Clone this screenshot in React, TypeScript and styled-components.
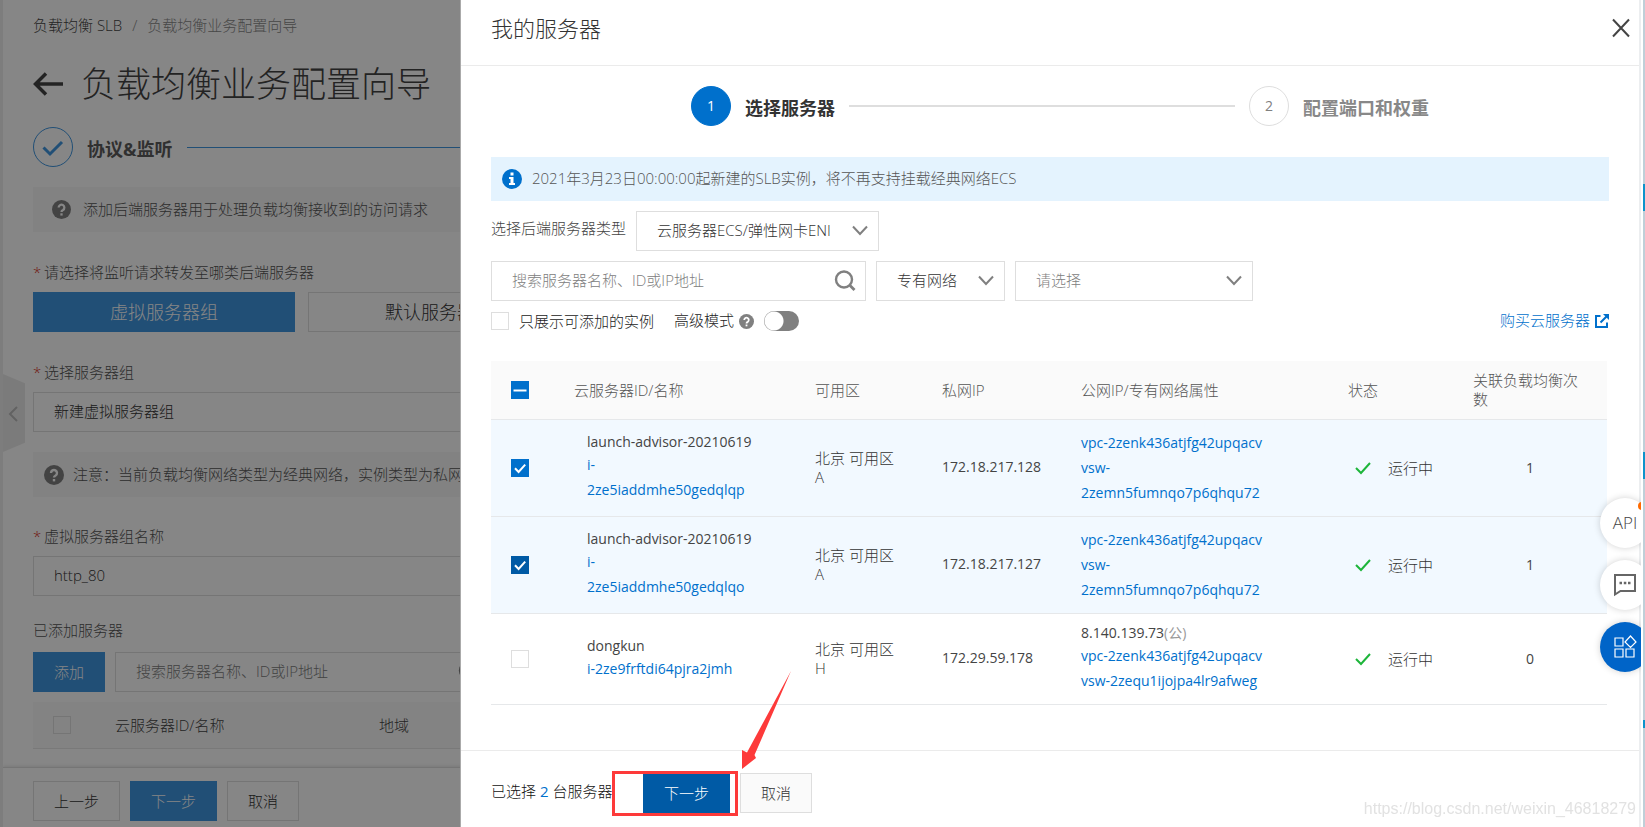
import React from "react";
import styled, { createGlobalStyle } from "styled-components";

const GlobalStyle = createGlobalStyle`
  *, *::before, *::after { box-sizing: border-box; }
  body {
    margin: 0;
    background: #fff;
    color: #333;
    font-family: "Open Sans", "Noto Sans", "Noto Sans CJK SC", sans-serif;
    font-size: 15px;
    font-weight: 300;
    line-height: 20px;
  }
  button, input, select { font: inherit; color: inherit; }
  a { color: #0070cc; text-decoration: none; }
`;

/* ---------- shared controls ---------- */

const Button = styled.button<{ $kind?: "primary" | "pressed" | "plain" | "faded" }>`
  flex: none;
  height: 40px;
  padding: 0 20px;
  border: 1px solid;
  cursor: pointer;
  white-space: nowrap;
  color: ${(p) => (p.$kind === "primary" || p.$kind === "pressed" ? "#fff" : "#333")};
  background: ${(p) =>
    p.$kind === "primary" ? "#3f96e0" : p.$kind === "pressed" ? "#005aa5" : p.$kind === "faded" ? "#fafafa" : "transparent"};
  border-color: ${(p) => (p.$kind === "primary" ? "#3f96e0" : p.$kind === "pressed" ? "#005aa5" : "#dedede")};
`;

const Field = styled.div<{ $width?: string }>`
  position: relative;
  display: flex;
  align-items: center;
  width: ${(p) => p.$width || "100%"};
  height: 40px;
  border: 1px solid #dedede;
  & > svg {
    position: absolute;
    right: 9px;
    pointer-events: none;
  }
`;

const TextInput = styled.input`
  width: 100%;
  height: 100%;
  border: 0;
  outline: 0;
  padding: 0 40px 2px 20px;
  background: transparent;
  &::placeholder { color: #808080; opacity: 1; }
`;

const Select = styled.select<{ $muted?: boolean }>`
  appearance: none;
  width: 100%;
  height: 100%;
  border: 0;
  outline: 0;
  padding: 0 30px 2px 20px;
  background: transparent;
  color: ${(p) => (p.$muted ? "#808080" : "#333")};
`;

const CheckInput = styled.input`
  appearance: none;
  display: block;
  flex: none;
  width: 18px;
  height: 18px;
  margin: 0;
  border: 1px solid #dedede;
`;

const CheckWrap = styled.span<{ $fill?: string }>`
  display: grid;
  width: 18px;
  height: 18px;
  & > * { grid-area: 1 / 1; }
  & > svg { pointer-events: none; z-index: 1; }
  ${CheckInput} {
    border-color: ${(p) => p.$fill || "#dedede"};
    background: ${(p) => p.$fill || "transparent"};
  }
`;

type CheckProps = { label: string; fill?: string; mark?: "check" | "dash"; id?: string };

function Checkbox({ label, fill, mark, id }: CheckProps) {
  return (
    <CheckWrap $fill={fill}>
      <CheckInput type="checkbox" id={id} aria-label={label} defaultChecked={mark === "check"} />
      {mark && (
        <svg width="18" height="18" viewBox="0 0 18 18" fill="none" stroke="#fff" strokeWidth="2">
          <path d={mark === "check" ? "M4 9.2 7.6 13 14.2 5.6" : "M2.5 9.5H15.5"} />
        </svg>
      )}
    </CheckWrap>
  );
}

function Chevron() {
  return (
    <svg width="18" height="12" viewBox="0 0 18 12" fill="none" stroke="#808080" strokeWidth="2">
      <path d="M2 1.5 9 9 16 1.5" />
    </svg>
  );
}

function SearchIcon() {
  return (
    <svg width="22" height="22" viewBox="0 0 22 22" fill="none" stroke="#808080" strokeWidth="2.4">
      <circle cx="10" cy="9.5" r="8" />
      <path d="M16 15.500 20.500 20" strokeWidth="2.8" />
    </svg>
  );
}

function Help({ size, color = "#808080" }: { size: number; color?: string }) {
  return (
    <svg width={size} height={size} viewBox="0 0 20 20" fill="none" stroke="#fff" strokeWidth="2.4">
      <circle cx="10" cy="10" r="10" fill={color} stroke="none" />
      <path d="M7 8a3 3 0 1 1 4.6 2.5C10.4 11.200 10 11.500 10 12.600" />
      <path d="M10 14v2.400" />
    </svg>
  );
}

/* ---------- page behind the drawer ---------- */

const Page = styled.div`
  position: relative;
  display: flex;
  flex-direction: column;
  min-height: 100vh;
  overflow: hidden;
  border-left: 3px solid #eee;
`;

const PageBody = styled.main`
  display: flex;
  flex-direction: column;
  padding: 15px 30px 0;
`;

const Crumbs = styled.nav`
  display: flex;
  gap: 10px;
  margin-bottom: 24px;
  a { color: #444; }
  span { color: #888; }
`;

const PageTitle = styled.h1`
  display: flex;
  align-items: center;
  gap: 18px;
  margin: 0 0 18px;
  font-size: 35px;
  line-height: 50px;
  font-weight: 300;
  color: #444;
`;

const StepRow = styled.div`
  display: flex;
  align-items: center;
  gap: 14px;
  margin-bottom: 20px;
`;

const StepName = styled.strong<{ $tone?: string }>`
  font-size: 18px;
  line-height: 24px;
  font-weight: 700;
  padding-top: 4px;
  color: ${(p) => p.$tone || "#333"};
  white-space: nowrap;
`;

const StepLine = styled.span<{ $done?: boolean }>`
  flex: 1;
  height: ${(p) => (p.$done ? 1 : 2)}px;
  background: ${(p) => (p.$done ? "#3f96e0" : "#dedede")};
`;

const Notice = styled.div<{ $inset: number; $gap: number }>`
  display: flex;
  align-items: center;
  gap: ${(p) => p.$gap}px;
  height: 45px;
  padding: 0 ${(p) => p.$inset}px;
  background: #f8f8f8;
  color: #555;
  white-space: nowrap;
  span { padding-bottom: 2px; }
`;

const GroupNotice = styled(Notice)`
  margin-top: 20px;
`;

const Label = styled.label<{ $top: number; $bottom?: number }>`
  display: flex;
  gap: 5px;
  margin: ${(p) => p.$top}px 0 ${(p) => p.$bottom || 10}px;
  color: #555;
  i { width: 6px; color: #d93026; font-style: normal; }
`;

const Group = styled.div<{ $gap: number }>`
  display: flex;
  gap: ${(p) => p.$gap}px;
`;

const TabButton = styled(Button)`
  width: 262px;
  font-size: 18px;
`;

const AddedHead = styled.table`
  width: 100%;
  margin-top: 10px;
  table-layout: fixed;
  border-collapse: collapse;
  background: #fafafa;
  th {
    height: 46px;
    padding: 0;
    text-align: left;
    font-weight: 300;
    color: #444;
    border-bottom: 1px solid #e6e6e6;
  }
  th:first-child { width: 82px; padding-left: 20px; }
  th:nth-child(2) { width: 264px; }
`;

const PageFooter = styled.footer`
  display: flex;
  gap: 10px;
  height: 60px;
  margin-top: auto;
  padding: 13px 30px 0;
  border-top: 1px solid #dedede;
  box-shadow: 0 -1px 3px rgba(0, 0, 0, 0.1);
`;

const Handle = styled.button`
  position: absolute;
  left: 0;
  top: 374px;
  width: 22px;
  height: 78px;
  padding: 0;
  border: 0;
  background: #ebebeb;
  clip-path: polygon(0 0, 100% 12%, 100% 88%, 0 100%);
`;

const Scrim = styled.div`
  position: fixed;
  inset: 0;
  background: rgba(0, 0, 0, 0.475);
`;

/* ---------- drawer ---------- */

const Drawer = styled.section`
  position: fixed;
  top: 0;
  bottom: 0;
  left: 460px;
  right: 4px;
  display: flex;
  flex-direction: column;
  background: #fff;
  border-left: 1px solid #aaa;
  border-right: 2px solid #eceef0;
`;

const DrawerHead = styled.header`
  display: flex;
  align-items: center;
  justify-content: space-between;
  height: 66px;
  padding: 0 8px 10px 30px;
  border-bottom: 1px solid #ebebeb;
  h2 { margin: 0; font-size: 22px; line-height: 30px; font-weight: 300; }
`;

const IconButton = styled.button`
  display: flex;
  padding: 0;
  border: 0;
  background: none;
  cursor: pointer;
`;

const DrawerBody = styled.div`
  flex: 1;
  padding: 20px 30px 0;
`;

const Steps = styled.div`
  display: flex;
  align-items: center;
  gap: 14px;
  margin: 0 180px 31px 200px;
`;

const StepDot = styled.span<{ $active?: boolean }>`
  display: flex;
  align-items: center;
  justify-content: center;
  flex: none;
  width: 40px;
  height: 40px;
  border-radius: 50%;
  border: 1px solid ${(p) => (p.$active ? "#0070cc" : "#dedede")};
  background: ${(p) => (p.$active ? "#0070cc" : "#fff")};
  color: ${(p) => (p.$active ? "#fff" : "#808080")};
  font-size: 14px;
  font-weight: 400;
`;

const Alert = styled.div`
  display: flex;
  align-items: center;
  gap: 10px;
  height: 44px;
  padding: 0 11px;
  background: #e4f3fe;
  color: #555;
  span { padding-bottom: 2px; }
`;

const Filters = styled.div`
  display: flex;
  align-items: center;
  gap: 10px;
  margin-top: 10px;
  & > label { flex: none; padding-bottom: 6px; color: #444; }
`;

const Options = styled.div`
  display: flex;
  align-items: center;
  gap: 10px;
  height: 20px;
  margin-top: 10px;
  color: #222;
`;

const Mode = styled.span`
  display: flex;
  align-items: center;
  gap: 5px;
  margin-left: 10px;
  label { padding-bottom: 2px; }
`;

const Toggle = styled.input`
  appearance: none;
  width: 35px;
  height: 20px;
  margin: 0;
  border-radius: 10px;
  background: radial-gradient(circle at 10px 10px, #fff 9px, #808080 10px);
`;

const BuyLink = styled.a`
  display: flex;
  align-items: center;
  gap: 5px;
  margin-left: auto;
  span { padding-bottom: 2px; }
`;

const ServerTable = styled.table`
  width: calc(100% - 2px);
  margin-top: 30px;
  table-layout: fixed;
  border-collapse: separate;
  border-spacing: 0;
  th, td {
    padding: 0 16px;
    text-align: left;
    vertical-align: middle;
    font-weight: 300;
    border-bottom: 1px solid #e6e8ea;
  }
  th { height: 59px; background: #fafafa; color: #555; line-height: 19px; }
  th:first-child, td:first-child { padding: 0 20px; }
`;

const Row = styled.tr<{ $selected: boolean }>`
  height: ${(p) => (p.$selected ? 97 : 91)}px;
  background: ${(p) => (p.$selected ? "#f2f9ff" : "#fff")};
`;

const Lines = styled.div<{ $indent?: boolean }>`
  display: flex;
  flex-direction: column;
  padding: 0 0 2px ${(p) => (p.$indent ? 13 : 0)}px;
  font-size: 14px;
  font-weight: 400;
  white-space: nowrap;
  a { line-height: 25px; }
  span { line-height: 20px; color: #444; }
  small { font-size: 14px; color: #999; }
`;

const Zone = styled.span`
  display: block;
  line-height: 19px;
`;

const Ip = styled.span`
  display: block;
  padding-bottom: 2px;
  font-size: 14px;
  font-weight: 400;
  color: #444;
`;

const Status = styled.span`
  display: flex;
  align-items: center;
  gap: 17px;
  padding-left: 7px;
`;

const Count = styled.td`
  && { padding-right: 20px; text-align: center; font-size: 14px; font-weight: 400; color: #444; }
`;

const DrawerFoot = styled.footer`
  display: flex;
  align-items: center;
  gap: 10px;
  height: 77px;
  padding: 7px 30px 0;
  border-top: 1px solid #ebebeb;
`;

const Selected = styled.span`
  width: 142px;
  padding-bottom: 4px;
  color: #111;
  white-space: nowrap;
  b { color: #0070cc; font-weight: 400; }
`;

/* ---------- things drawn over the drawer ---------- */

const Marker = styled.div`
  position: absolute;
  left: 151px;
  bottom: 11px;
  width: 126px;
  height: 45px;
  border: 3px solid #fd3a3a;
  pointer-events: none;
`;

const Arrow = styled.svg`
  position: absolute;
  left: 280px;
  bottom: 57px;
  pointer-events: none;
`;

const Dock = styled.aside`
  position: fixed;
  right: 4px;
  top: 490px;
  width: 60px;
  display: flex;
  flex-direction: column;
  align-items: flex-start;
  gap: 12px;
  padding: 8px 0 8px 19px;
  overflow: hidden;
`;

const DockButton = styled.button<{ $blue?: boolean }>`
  position: relative;
  flex: none;
  display: flex;
  align-items: center;
  justify-content: center;
  width: 50px;
  height: 50px;
  padding: 0;
  border: 0;
  border-radius: 50%;
  background: ${(p) => (p.$blue ? "#0064c8" : "#fff")};
  box-shadow: 0 0 7px rgba(0, 0, 0, 0.18);
  color: #444;
  font-size: 17px;
`;

const Dot = styled.i`
  position: absolute;
  top: 4px;
  right: 4px;
  width: 8px;
  height: 8px;
  border-radius: 50%;
  background: #ff6a00;
`;

const Edge = styled.div`
  position: fixed;
  top: 0;
  bottom: 0;
  right: 0;
  width: 4px;
  background: #fff;
  border-right: 2px solid #bfcfd8;
`;

const EdgeMark = styled.i<{ $top: number; $height: number }>`
  position: absolute;
  right: -2px;
  top: ${(p) => p.$top}px;
  width: 2px;
  height: ${(p) => p.$height}px;
  background: #0d93cb;
`;

const Watermark = styled.div`
  position: fixed;
  right: 9px;
  bottom: 8px;
  font-family: "Liberation Sans", sans-serif;
  font-size: 16px;
  font-weight: 400;
  color: #e2e2e2;
`;

/* ---------- data ---------- */

const VPC = "vpc-2zenk436atjfg42upqacv";

const servers = [
  {
    name: "launch-advisor-20210619", id: ["i-", "2ze5iaddmhe50gedqlqp"], zone: "A", ip: "172.18.217.128",
    net: [VPC, "vsw-", "2zemn5fumnqo7p6qhqu72"], count: 1, fill: "#0070cc",
  },
  {
    name: "launch-advisor-20210619", id: ["i-", "2ze5iaddmhe50gedqlqo"], zone: "A", ip: "172.18.217.127",
    net: [VPC, "vsw-", "2zemn5fumnqo7p6qhqu72"], count: 1, fill: "#005aa5",
  },
  {
    name: "dongkun", id: ["i-2ze9frftdi64pjra2jmh"], zone: "H", ip: "172.29.59.178", publicIp: "8.140.139.73",
    net: [VPC, "vsw-2zequ1ijojpa4lr9afweg"], count: 0,
  },
];

const columns = [67, 241, 127, 139, 267, 125, 150];

function Background() {
  return (
    <Page>
      <PageBody>
        <Crumbs>
          <a href="#slb">负载均衡 SLB</a>
          <span>/</span>
          <span>负载均衡业务配置向导</span>
        </Crumbs>
        <PageTitle>
          <svg width="30" height="24" viewBox="0 0 30 24" fill="none" stroke="#444" strokeWidth="3.500">
            <path d="M13 1.500 2.500 12 13 22.500M2.500 12H30" />
          </svg>
          负载均衡业务配置向导
        </PageTitle>
        <StepRow>
          <svg width="40" height="40" viewBox="0 0 40 40" fill="none" stroke="#3f96e0">
            <circle cx="20" cy="20" r="19.500" />
            <path d="M10.500 20.500 17 27 29 15" strokeWidth="3" />
          </svg>
          <StepName $tone="#5c5c5c">协议&amp;监听</StepName>
          <StepLine $done />
        </StepRow>
        <Notice $inset={19} $gap={12}>
          <Help size={19} />
          <span>添加后端服务器用于处理负载均衡接收到的访问请求</span>
        </Notice>
        <Label as="div" $top={30}><i>*</i>请选择将监听请求转发至哪类后端服务器</Label>
        <Group $gap={13}>
          <TabButton $kind="primary">虚拟服务器组</TabButton>
          <TabButton>默认服务器组</TabButton>
        </Group>
        <Label htmlFor="group" $top={30}><i>*</i>选择服务器组</Label>
        <Field>
          <Select id="group"><option>新建虚拟服务器组</option></Select>
        </Field>
        <GroupNotice $inset={11} $gap={9}>
          <Help size={20} />
          <span>注意：当前负载均衡网络类型为经典网络，实例类型为私网</span>
        </GroupNotice>
        <Label htmlFor="gname" $top={29}><i>*</i>虚拟服务器组名称</Label>
        <Field><TextInput id="gname" defaultValue="http_80" /></Field>
        <Label as="div" $top={24} $bottom={12}>已添加服务器</Label>
        <Group $gap={10}>
          <Button $kind="primary">添加</Button>
          <Field $width="375px">
            <TextInput aria-label="搜索" placeholder="搜索服务器名称、ID或IP地址" />
            <SearchIcon />
          </Field>
        </Group>
        <AddedHead>
          <thead>
            <tr>
              <th><Checkbox label="全选" /></th>
              <th>云服务器ID/名称</th>
              <th>地域</th>
            </tr>
          </thead>
        </AddedHead>
      </PageBody>
      <PageFooter>
        <Button>上一步</Button>
        <Button $kind="primary">下一步</Button>
        <Button>取消</Button>
      </PageFooter>
      <Handle aria-label="收起">
        <svg width="22" height="78" viewBox="0 0 22 78" fill="none" stroke="#bbb" strokeWidth="2">
          <path d="M14 33 7 40 14 47" />
        </svg>
      </Handle>
    </Page>
  );
}

export default function App() {
  return (
    <>
      <GlobalStyle />
      <Background />
      <Scrim />
      <Edge>
        <EdgeMark $top={184} $height={27} />
        <EdgeMark $top={452} $height={27} />
        <EdgeMark $top={720} $height={8} />
      </Edge>
      <Drawer aria-label="我的服务器">
        <DrawerHead>
          <h2>我的服务器</h2>
          <IconButton aria-label="关闭">
            <svg width="20" height="20" viewBox="0 0 20 20" fill="none" stroke="#444" strokeWidth="2">
              <path d="M2 1.500 18 18.500M18 1.500 2 18.500" />
            </svg>
          </IconButton>
        </DrawerHead>
        <DrawerBody>
          <Steps>
            <StepDot $active>1</StepDot>
            <StepName>选择服务器</StepName>
            <StepLine />
            <StepDot>2</StepDot>
            <StepName $tone="#888">配置端口和权重</StepName>
          </Steps>
          <Alert>
            <svg width="20" height="20" viewBox="0 0 20 20" fill="#fff">
              <circle cx="10" cy="10" r="10" fill="#0070cc" />
              <path d="M8.500 3.500h3v3h-3zM7 8h4.500v6H13v2H7v-2h1.500v-4H7z" />
            </svg>
            <span>2021年3月23日00:00:00起新建的SLB实例，将不再支持挂载经典网络ECS</span>
          </Alert>
          <Filters>
            <label htmlFor="stype">选择后端服务器类型</label>
            <Field $width="243px">
              <Select id="stype"><option>云服务器ECS/弹性网卡ENI</option></Select>
              <Chevron />
            </Field>
          </Filters>
          <Filters>
            <Field $width="375px">
              <TextInput aria-label="搜索服务器" placeholder="搜索服务器名称、ID或IP地址" />
              <SearchIcon />
            </Field>
            <Field $width="129px">
              <Select aria-label="网络类型"><option>专有网络</option></Select>
              <Chevron />
            </Field>
            <Field $width="238px">
              <Select $muted aria-label="专有网络"><option>请选择</option></Select>
              <Chevron />
            </Field>
          </Filters>
          <Options>
            <Checkbox id="only" label="只展示可添加的实例" />
            <label htmlFor="only">只展示可添加的实例</label>
            <Mode>
              <label htmlFor="mode">高级模式</label>
              <Help size={15} />
            </Mode>
            <Toggle type="checkbox" role="switch" id="mode" />
            <BuyLink href="#buy">
              <span>购买云服务器</span>
              <svg width="14" height="14" viewBox="0 0 14 14" fill="none" stroke="#0070cc" strokeWidth="2">
                <path d="M5.500 2H1v11h11V8.500M5.500 8.500 12 2" />
                <path d="M8 0h6v6z" fill="#0070cc" stroke="none" />
              </svg>
            </BuyLink>
          </Options>
          <ServerTable>
            <colgroup>
              {columns.map((w, i) => <col key={i} width={w} />)}
            </colgroup>
            <thead>
              <tr>
                <th><Checkbox label="全选" fill="#0070cc" mark="dash" /></th>
                <th>云服务器ID/名称</th>
                <th>可用区</th>
                <th>私网IP</th>
                <th>公网IP/专有网络属性</th>
                <th>状态</th>
                <th>关联负载均衡次数</th>
              </tr>
            </thead>
            <tbody>
              {servers.map((s) => (
                <Row key={s.ip} $selected={!!s.fill}>
                  <td><Checkbox label={s.id.join("")} fill={s.fill} mark={s.fill ? "check" : undefined} /></td>
                  <td>
                    <Lines $indent>
                      <span>{s.name}</span>
                      {s.id.map((t) => <a href="#server" key={t}>{t}</a>)}
                    </Lines>
                  </td>
                  <td><Zone>北京 可用区</Zone><Zone>{s.zone}</Zone></td>
                  <td><Ip>{s.ip}</Ip></td>
                  <td>
                    <Lines>
                      {s.publicIp && <span>{s.publicIp}<small>(公)</small></span>}
                      {s.net.map((t) => <a href="#net" key={t}>{t}</a>)}
                    </Lines>
                  </td>
                  <td>
                    <Status>
                      <svg width="16" height="14" viewBox="0 0 16 14" fill="none" stroke="#1db53a" strokeWidth="2">
                        <path d="M1 7 6 12 15 2" />
                      </svg>
                      运行中
                    </Status>
                  </td>
                  <Count>{s.count}</Count>
                </Row>
              ))}
            </tbody>
          </ServerTable>
        </DrawerBody>
        <DrawerFoot>
          <Selected>已选择 <b>2</b> 台服务器</Selected>
          <Button $kind="pressed">下一步</Button>
          <Button $kind="faded">取消</Button>
        </DrawerFoot>
        <Marker />
        <Arrow width="52" height="100" viewBox="0 0 52 100" fill="#fd3a3a">
          <path d="M1 99V80L6 82.500 50 1 13.500 85 15 88Z" />
        </Arrow>
      </Drawer>
      <Dock>
        <DockButton>API<Dot /></DockButton>
        <DockButton aria-label="消息">
          <svg width="24" height="24" viewBox="0 0 24 24" fill="none" stroke="#666" strokeWidth="2">
            <path d="M2 2H22V18H7.500L2 21.500Z" />
            <path d="M6.500 10h2.500M10.800 10h2.500M15 10h2.500" strokeWidth="2.500" />
          </svg>
        </DockButton>
        <DockButton $blue aria-label="应用">
          <svg width="24" height="24" viewBox="0 0 24 24" fill="none" stroke="#fff" strokeWidth="1.200">
            <path d="M2 3h8v8H2zM2 14h8v8H2zM13 14h8v8h-8zM17.500 1 23 7 17.500 12.500 12 7Z" />
          </svg>
        </DockButton>
      </Dock>
      <Watermark>https://blog.csdn.net/weixin_46818279</Watermark>
    </>
  );
}
